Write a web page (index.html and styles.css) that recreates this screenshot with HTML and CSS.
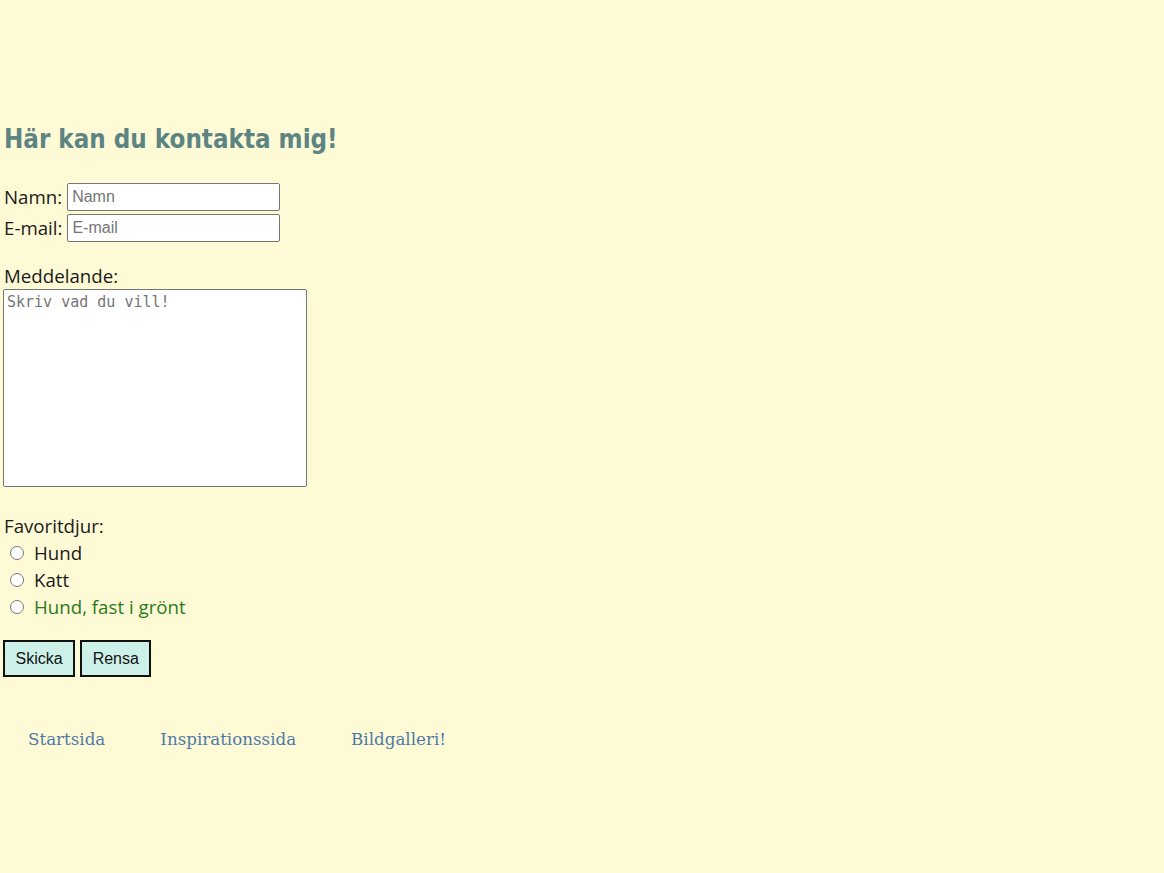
FILE: index.html
```html
<!DOCTYPE html>
<html lang="sv">
<head>
<meta charset="utf-8">
<title>Kontakt</title>
<link rel="stylesheet" href="styles.css">
</head>
<body>
<main class="page">
  <h1 class="title">Här kan du kontakta mig!</h1>
  <form class="contact">
    <div class="row"><label for="namn">Namn:</label> <input id="namn" class="field" type="text" placeholder="Namn"></div>
    <div class="row"><label for="mail">E-mail:</label> <input id="mail" class="field" type="text" placeholder="E-mail"></div>
    <div class="block">
      <label for="msg" class="blocklabel">Meddelande:</label>
      <textarea id="msg" class="message" placeholder="Skriv vad du vill!"></textarea>
    </div>
    <div class="block">
      <div class="blocklabel">Favoritdjur:</div>
      <label class="radio"><input type="radio" name="djur"> Hund</label>
      <label class="radio"><input type="radio" name="djur"> Katt</label>
      <label class="radio green"><input type="radio" name="djur"> Hund, fast i grönt</label>
    </div>
    <div class="buttons">
      <button type="button" class="btn">Skicka</button>
      <button type="button" class="btn">Rensa</button>
    </div>
  </form>
  <nav class="nav">
    <a href="#" class="navlink">Startsida</a>
    <a href="#" class="navlink">Inspirationssida</a>
    <a href="#" class="navlink">Bildgalleri!</a>
  </nav>
</main>
</body>
</html>
```

FILE: styles.css
```css
html, body {
  margin: 0;
  padding: 0;
  background: #fefad6;
}
.page {
  padding: 0 0 0 4px;
  font-family: "Open Sans", "Noto Sans", sans-serif;
  font-size: 18.7px;
  color: #1a1a1a;
}
.title {
  margin: 0;
  padding-top: 121px;
  font-family: "DejaVu Sans Condensed", "DejaVu Sans", sans-serif;
  font-weight: bold;
  font-size: 25.7px;
  line-height: 36px;
  color: #5c8483;
}
.contact {
  margin-top: 24px;
}
.row {
  display: flex;
  align-items: center;
  gap: 5px;
  height: 31px;
}
.field {
  width: 213px;
  height: 28px;
  box-sizing: border-box;
  margin: 0;
  padding: 1px 4px;
  border: 1px solid #767676;
  border-radius: 2px;
  background: #fff;
  font-family: "Liberation Sans", Arial, sans-serif;
  font-size: 16px;
}
.field::placeholder { color: #757575; }
.block {
  margin-top: 19px;
  display: flex;
  flex-direction: column;
  align-items: flex-start;
}
.blocklabel {
  line-height: 27px;
}
.block + .block {
  margin-top: 25px;
}
.message {
  margin: 0 0 0 -1px;
  width: 304px;
  height: 198px;
  box-sizing: border-box;
  border: 1px solid #767676;
  border-radius: 2px;
  background: #fff;
  padding: 3px 3px;
  font-family: "DejaVu Sans Mono", monospace;
  font-size: 15px;
  resize: none;
}
.message::placeholder { color: #757575; }
.radio {
  display: flex;
  align-items: center;
  height: 27px;
}
.radio input {
  margin: 0 10px 0 6px;
  width: 14px;
  height: 14px;
}
.green { color: #2a7a1c; }
.buttons {
  margin-top: 20px;
  display: flex;
  gap: 5px;
  margin-left: -1px;
}
.btn {
  height: 37px;
  padding: 0 10.5px;
  background: #cdf1e8;
  border: 2px solid #111;
  border-radius: 0;
  font-family: "Liberation Sans", Arial, sans-serif;
  font-size: 16px;
  color: #111;
}
.nav {
  margin-top: 52px;
  display: flex;
  gap: 55px;
  padding-left: 24px;
}
.navlink {
  font-family: "DejaVu Serif", serif;
  font-size: 16.7px;
  color: #4f7aa6;
  text-decoration: none;
}
```
